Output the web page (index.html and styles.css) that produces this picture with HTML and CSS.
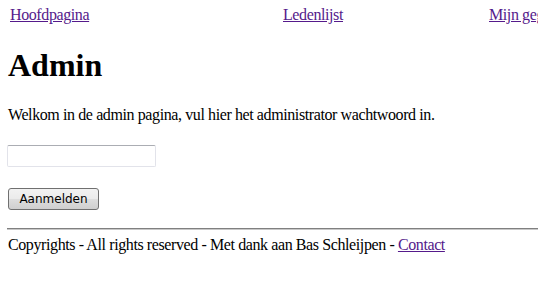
FILE: index.html
```html
<!DOCTYPE html>
<html lang="nl">
<head>
<meta charset="utf-8">
<title>Admin</title>
<link rel="stylesheet" href="styles.css">
</head>
<body>
<div class="page">
  <nav class="nav">
    <a href="#">Hoofdpagina</a>
    <a href="#">Ledenlijst</a>
    <a href="#">Mijn gegevens</a>
  </nav>
  <h1 class="title">Admin</h1>
  <p class="intro">Welkom in de admin pagina, vul hier het administrator wachtwoord in.</p>
  <form class="login">
    <input class="field" type="password">
    <button class="btn" type="button">Aanmelden</button>
  </form>
  <hr class="rule">
  <p class="footer">Copyrights - All rights reserved - Met dank aan Bas Schleijpen - <a href="#">Contact</a></p>
</div>
</body>
</html>
```

FILE: styles.css
```css
html, body {
  margin: 0;
  padding: 0;
  overflow: hidden;
  background: #ffffff;
}

.page {
  width: 700px;
  padding: 6px 8px 0 8px;
  font-family: "Liberation Serif", "Times New Roman", serif;
  font-size: 16px;
  letter-spacing: -0.4px;
  color: #000000;
}

a {
  color: #551a8b;
  text-decoration: underline;
}

.nav {
  display: grid;
  grid-template-columns: 273px 206px 200px;
  padding-left: 2px;
  line-height: normal;
}

.title {
  font-size: 32px;
  font-weight: bold;
  letter-spacing: 0;
  margin: 23px 0 22px 0;
  line-height: normal;
}

.intro {
  margin: 0 0 21px 0;
}

.login {
  display: flex;
  flex-direction: column;
  align-items: flex-start;
  gap: 21px;
  margin: 0;
}

.field {
  box-sizing: border-box;
  width: 149px;
  height: 22px;
  margin: 0 0 0 -1px;
  padding: 1px 3px;
  border: 1px solid #e2e3ea;
  border-top-color: #abadb3;
  border-radius: 2px;
  background: #ffffff;
  font-family: "DejaVu Sans", sans-serif;
  font-size: 12px;
  outline: none;
}

.btn {
  box-sizing: border-box;
  width: 91px;
  height: 22px;
  padding: 0;
  margin: 0;
  border: 1px solid #707070;
  border-radius: 3px;
  background: linear-gradient(to bottom, #f2f2f2 0%, #ebebeb 48%, #dddddd 52%, #cfcfcf 100%);
  font-family: "DejaVu Sans", Tahoma, sans-serif;
  font-size: 12px;
  letter-spacing: 0;
  color: #000000;
  line-height: 20px;
}

.rule {
  height: 0;
  margin: 18px -40px 6px -1px;
  border: 0;
  border-top: 1px solid #808080;
  border-bottom: 1px solid #c8c8c8;
}

.footer {
  margin: 0;
}
```
